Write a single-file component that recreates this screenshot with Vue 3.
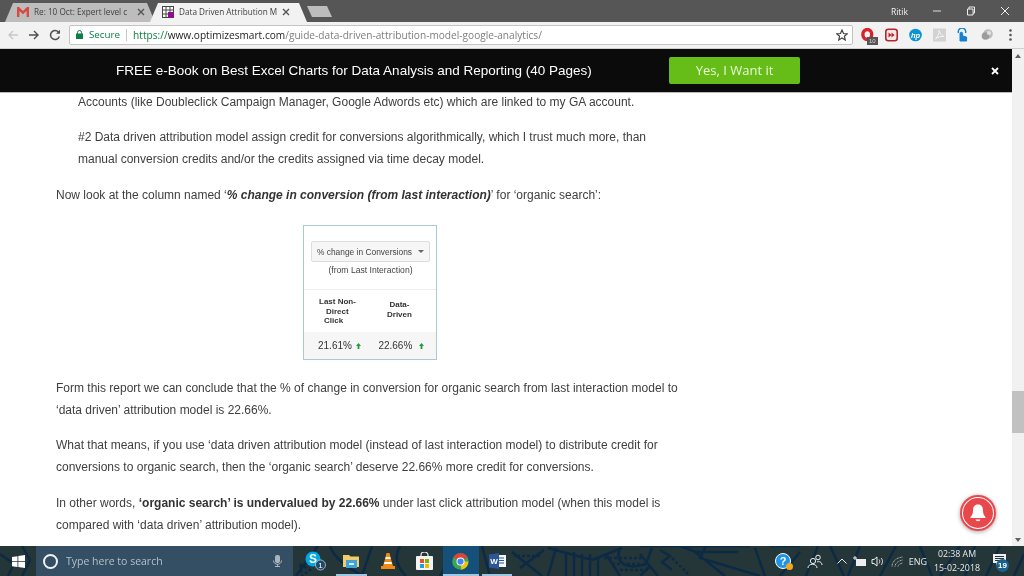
<script setup>
const paragraphs = [
  { cls: 'p-a indent', html: 'Accounts (like Doubleclick Campaign Manager, Google Adwords etc) which are linked to my GA account.' },
  { cls: 'p-b indent', html: '#2 Data driven attribution model assign credit for conversions algorithmically, which I trust much more, than<br>manual conversion credits and/or the credits assigned via time decay model.' },
  { cls: 'p-c', html: 'Now look at the column named ‘<b><i>% change in conversion (from last interaction)</i></b>’ for ‘organic search’:' }
]
const after = [
  { cls: 'p-d', html: 'Form this report we can conclude that the % of change in conversion for organic search from last interaction model to<br>‘data driven’ attribution model is 22.66%.' },
  { cls: 'p-e', html: 'What that means, if you use ‘data driven attribution model (instead of last interaction model) to distribute credit for<br>conversions to organic search, then the ‘organic search’ deserve 22.66% more credit for conversions.' },
  { cls: 'p-f', html: 'In other words, <b>‘organic search’ is undervalued by 22.66%</b> under last click attribution model (when this model is<br>compared with ‘data driven’ attribution model).' }
]
</script>

<template>
  <div class="screen">
    <div class="tabstrip">
      <div class="tab inactive">
        <svg class="fav" width="12" height="10" viewBox="0 0 12 10"><path d="M0 0h2l4 4 4-4h2v10h-2.400V4L6 7.200 2.400 4v6H0z" fill="#d64b3f"/></svg>
        <span class="tab-title">Re: 10 Oct: Expert level c</span>
        <svg class="tab-x" width="8" height="8" viewBox="0 0 8 8"><path d="M1 1l6 6M7 1L1 7" stroke="#555" stroke-width="1.400"/></svg>
      </div>
      <div class="tab active">
        <svg class="fav" width="12" height="12" viewBox="0 0 12 12"><rect width="12" height="12" fill="#fff"/><rect x="6" y="6" width="6" height="6" fill="#8e0f8e"/><path d="M.5 0v12M4 0v12M8 0v6M11.500 0v6M0 .5h12M0 4h12M0 8h6M0 11.500h6" stroke="#444" stroke-width="1"/></svg>
        <span class="tab-title">Data Driven Attribution M</span>
        <svg class="tab-x" width="8" height="8" viewBox="0 0 8 8"><path d="M1 1l6 6M7 1L1 7" stroke="#555" stroke-width="1.400"/></svg>
      </div>
      <div class="newtab"></div>
      <div class="spring"></div>
      <span class="user">Ritik</span>
      <svg class="win" width="10" height="10" viewBox="0 0 10 10"><path d="M1 5h8" stroke="#ddd"/></svg>
      <svg class="win" width="10" height="10" viewBox="0 0 10 10"><path d="M1.500 3h5.500v6h-5.500zM3 3V1h5.500v6H7" fill="none" stroke="#eee"/></svg>
      <svg class="win last" width="10" height="10" viewBox="0 0 10 10"><path d="M1 1l8 8M9 1l-8 8" stroke="#eee"/></svg>
    </div>

    <div class="toolbar">
      <svg class="nav" width="12" height="12" viewBox="0 0 12 12"><path d="M11 6H2M6 2L2 6l4 4" fill="none" stroke="#c8c8c8" stroke-width="1.400"/></svg>
      <svg class="nav" width="12" height="12" viewBox="0 0 12 12"><path d="M1 6h9M6 2l4 4-4 4" fill="none" stroke="#505050" stroke-width="1.400"/></svg>
      <svg class="nav reload" width="12" height="12" viewBox="0 0 12 12"><path d="M10.300 7.500A4.500 4.500 0 1 1 9.400 3" fill="none" stroke="#505050" stroke-width="1.500"/><path d="M11 .8v4H7z" fill="#505050"/></svg>
      <div class="omnibox">
        <svg width="7" height="9" viewBox="0 0 7 9"><path d="M1.500 4V2.500a2 2 0 0 1 4 0V4" fill="none" stroke="#0b8043"/><rect y="3.500" width="7" height="5.500" rx=".5" fill="#0b8043"/></svg>
        <span class="secure">Secure</span>
        <span class="sep"></span>
        <span class="url"><span class="https">https://</span><span class="host">www.optimizesmart.com</span>/guide-data-driven-attribution-model-google-analytics/</span>
        <span class="spring"></span>
        <svg width="12" height="12" viewBox="0 0 24 24"><path d="M12 2l3 7 7.500.6-5.700 5 1.700 7.400L12 18l-6.500 4 1.700-7.400-5.700-5L9 9z" fill="none" stroke="#444" stroke-width="2.400"/></svg>
      </div>
      <div class="ext">
        <span class="ext-item">
          <svg width="13" height="14" viewBox="0 0 13 14"><ellipse cx="6.300" cy="6.500" rx="4.400" ry="5" fill="none" stroke="#d8232a" stroke-width="3.400"/></svg>
          <span class="badge">10</span>
        </span>
        <svg class="ext-item" width="13" height="13" viewBox="0 0 13 13"><rect x=".8" y=".8" width="11.400" height="11.400" rx="2.500" fill="#f6e6e6" stroke="#b3262b" stroke-width="1.600"/><path d="M3.500 4l3 2.500-3 2.500zM6.500 4l3 2.500-3 2.500z" fill="#b3262b"/></svg>
        <svg class="ext-item" width="13" height="13" viewBox="0 0 13 13"><circle cx="6.500" cy="6.500" r="6.300" fill="#0a94d6"/><text x="6.500" y="9.200" text-anchor="middle" font-size="7.500" font-style="italic" font-weight="700" font-family="Liberation Sans, sans-serif" fill="#fff">hp</text></svg>
        <svg class="ext-item" width="13" height="13" viewBox="0 0 13 13"><rect width="13" height="13" fill="#d2d2d2"/><path d="M2.500 10.500C5 8 6.500 4 6 2c1 3 3 5.500 5 6-3-.5-6 .5-8.500 2.500z" fill="none" stroke="#f4f4f4"/></svg>
        <svg class="ext-item" width="13" height="14" viewBox="0 0 13 14"><path d="M3 13V5.500a1.300 1.300 0 0 1 2.600 0V8l4 1v4z" fill="#1680d0" stroke="#1680d0" stroke-width="1"/><path d="M1.500 5a3.700 3.700 0 1 1 7 0" fill="none" stroke="#1680d0" stroke-width="1.500"/></svg>
        <svg class="ext-item" width="13" height="13" viewBox="0 0 13 13"><circle cx="7" cy="5.500" r="4.800" fill="#bdbdbd"/><circle cx="4.500" cy="7.500" r="3.800" fill="#9c9c9c"/><circle cx="8" cy="4.500" r="2" fill="#e2e2e2"/></svg>
        <svg class="ext-item" width="3" height="12" viewBox="0 0 3 12"><circle cx="1.500" cy="1.500" r="1.300" fill="#555"/><circle cx="1.500" cy="6" r="1.300" fill="#555"/><circle cx="1.500" cy="10.500" r="1.300" fill="#555"/></svg>
      </div>
    </div>

    <div class="viewport">
      <div class="page">
        <div class="banner">
          <span class="banner-text">FREE e-Book on Best Excel Charts for Data Analysis and Reporting (40 Pages)</span>
          <span class="cta">Yes, I Want it</span>
          <svg class="close" width="8" height="8" viewBox="0 0 8 8"><path d="M1 1l6 6M7 1L1 7" stroke="#fff" stroke-width="1.800"/></svg>
        </div>
        <div class="article">
          <p v-for="p in paragraphs" :key="p.cls" :class="p.cls" v-html="p.html"></p>
          <div class="report">
            <div class="report-top">
              <div class="select"><span>% change in Conversions</span><i class="caret"></i></div>
              <div class="from">(from Last Interaction)</div>
            </div>
            <div class="heads">
              <div class="h1">Last Non-<br><span class="h1b">Direct</span><br><span class="h1c">Click</span></div>
              <div class="h2">Data-<br>Driven</div>
            </div>
            <div class="vals">
              <span class="val">21.61%<svg width="5" height="6" viewBox="0 0 5 6"><path d="M2.500 0L5 3H3.400v3H1.600V3H0z" fill="#1f9d38"/></svg></span>
              <span class="val">22.66%<svg class="far" width="5" height="6" viewBox="0 0 5 6"><path d="M2.500 0L5 3H3.400v3H1.600V3H0z" fill="#1f9d38"/></svg></span>
            </div>
          </div>
          <p v-for="p in after" :key="p.cls" :class="p.cls" v-html="p.html"></p>
        </div>
        <div class="bell">
          <svg width="20" height="20" viewBox="0 0 20 20"><path d="M10 1.500c-3.500 0-5 2.500-5 6 0 3.500-1 5-2.500 6.500v1h15v-1C16 12.500 15 11 15 7.500c0-3.500-1.500-6-5-6z" fill="#fff"/><path d="M7.500 16.500h5a2.500 1.800 0 0 1-5 0z" fill="#fff"/></svg>
        </div>
      </div>
      <div class="scrollbar">
        <i class="arrow up"></i>
        <div class="thumb"></div>
        <i class="arrow down"></i>
      </div>
    </div>

    <div class="taskbar">
      <svg class="wallpaper" width="1024" height="30" viewBox="0 0 1024 30"><path d="M0 8l14 10-6 12M22 0l8 14-8 16M296 30l22-30M330 0c4 12 20 24 34 30M372 0l-10 30M400 0c-6 10-4 20 6 30M440 30l16-30M482 0l8 30M512 6l30 24M520 22l24-18M556 2l-8 28M566 6v24M574 6v24M582 8v22M590 8v22M598 12v18M548 2l44 12 30-12M606 8l14 22M620 2c-6 16 8 22 26 16l6-16M640 30l10-10M660 4l10 6-8 6 10 8M680 0l16 6 42 0M640 0h110M640 8l18 22M695 6l30 24M706 0l-6 12 60 18M755 2l10 28M770 0h30M780 30l20-24M806 30l12-30M830 0l14 30M860 0l-12 30M880 30l16-30M920 0l12 30M940 30l20-30M975 0l-10 30M1000 0l-14 30M1014 30l10-22" fill="none" stroke="#0c2a44" stroke-width="2.500"/><path d="M300 18l10 6-8 6zM604 12h40M612 18h36M620 24h30M540 10h-26M672 12l16 16" fill="none" stroke="#0c2a44" stroke-width="2.500" stroke-dasharray="3 2"/></svg>
      <svg class="start" width="13" height="13" viewBox="0 0 13 13"><path d="M0 2l5.500-.8v5H0zM6.300 1.100L13 0v6.200H6.300zM0 7h5.500v5L0 11.200zM6.300 7H13v6l-6.700-1z" fill="#fff"/></svg>
      <div class="search">
        <span class="cortana"></span>
        <span class="search-text">Type here to search</span>
        <span class="spring"></span>
        <svg width="9" height="12" viewBox="0 0 9 12"><rect x="2" y="0" width="5" height="8" rx="2" fill="#a9b4bd"/><path d="M.5 5.500c0 5 8 5 8 0M4.500 9v2M2 11.500h5" fill="none" stroke="#a9b4bd"/></svg>
      </div>
      <div class="tb-icon">
        <svg width="24" height="24" viewBox="0 0 24 24"><circle cx="10" cy="10" r="7.500" fill="#00a9e6"/><text x="10" y="14" text-anchor="middle" font-size="12" font-weight="700" font-family="Liberation Sans, sans-serif" fill="#fff">S</text><circle cx="17.500" cy="16" r="5" fill="#1f4a66" stroke="#cde" stroke-width=".7"/><text x="17.500" y="19" text-anchor="middle" font-size="8" font-family="Liberation Sans, sans-serif" fill="#fff">1</text></svg>
      </div>
      <div class="tb-icon running">
        <svg width="17" height="14" viewBox="0 0 17 14"><path d="M0 1h6l1.500 1.500H16V13H0z" fill="#f2cd6c"/><rect x="3" y="6" width="11" height="8" fill="#3fa3dc"/><rect x="6" y="9" width="5" height="2" fill="#d8eef8"/></svg>
      </div>
      <div class="tb-icon">
        <svg width="14" height="16" viewBox="0 0 14 16"><path d="M5.500 0h3L10 6l2 7h2v3H0v-3h2l2-7z" fill="#f08a14"/><path d="M4.800 4h4.400l.5 2H4.300zM3.500 9h7l.5 2H3z" fill="#fff"/></svg>
      </div>
      <div class="tb-icon">
        <svg width="17" height="18" viewBox="0 0 17 18"><rect y="4" width="17" height="14" rx="1" fill="#f4f4f4"/><path d="M5 5V3a3.500 3 0 0 1 7 0v2" fill="none" stroke="#f4f4f4" stroke-width="1.200"/><rect x="4" y="7" width="4" height="4" fill="#e8522a"/><rect x="9" y="7" width="4" height="4" fill="#7ab800"/><rect x="4" y="12" width="4" height="4" fill="#1ca1e8"/><rect x="9" y="12" width="4" height="4" fill="#f9b800"/></svg>
      </div>
      <div class="tb-icon chrome running">
        <svg width="17" height="17" viewBox="0 0 17 17"><circle cx="8.500" cy="8.500" r="8.300" fill="#3aa757"/><path d="M8.500 8.500L1.300 4.300A8.300 8.300 0 0 1 15.700 4.300z" fill="#db4437"/><path d="M8.500 8.500h7.800a8.300 8.300 0 0 1-7 8.200z" fill="#f4c20d"/><circle cx="8.500" cy="8.500" r="4" fill="#fff"/><circle cx="8.500" cy="8.500" r="3.100" fill="#4285f4"/></svg>
      </div>
      <div class="tb-icon running">
        <svg width="17" height="16" viewBox="0 0 17 16"><rect x="7" y="2" width="10" height="12" fill="#f4f6fa"/><path d="M9 5h6M9 7.500h6M9 10h6" stroke="#2b579a"/><path d="M0 1.500L10 0v16L0 14.500z" fill="#2b579a"/><text x="5" y="11" text-anchor="middle" font-size="8" font-weight="700" font-family="Liberation Sans, sans-serif" fill="#fff">W</text></svg>
      </div>
      <div class="spring"></div>
      <div class="tray">
        <span class="slot"><span class="help">?<i></i></span></span>
        <span class="slot"><svg width="16" height="15" viewBox="0 0 16 15"><circle cx="6" cy="7" r="2.600" fill="none" stroke="#eee"/><path d="M1 14c0-5 9-5 9 0" fill="none" stroke="#eee"/><circle cx="11" cy="3.500" r="2.300" fill="none" stroke="#eee"/><path d="M10 8c2-1 5 0 5 3" fill="none" stroke="#eee"/></svg></span>
        <span class="slot"><svg width="10" height="6" viewBox="0 0 10 6"><path d="M.5 5.500L5 1l4.500 4.500" fill="none" stroke="#eee"/></svg></span>
        <span class="slot"><svg width="13" height="11" viewBox="0 0 13 11"><rect x="3" y="3" width="10" height="7" fill="#eee"/><path d="M0 2h4M2 0v4" stroke="#eee"/></svg></span>
        <span class="slot"><svg width="13" height="11" viewBox="0 0 13 11"><path d="M1 3.500h2L6 1v9L3 7.500H1z" fill="none" stroke="#eee"/><path d="M8 3.500c1 1 1 3 0 4M10 2c2 2 2 5 0 7" fill="none" stroke="#eee"/></svg></span>
        <span class="slot"><svg width="13" height="11" viewBox="0 0 13 11"><path d="M1 10.500C1 6 5 1.500 12 1M4 10.500C4 8 7 4.500 12 4M7 10.500C7 9 9 7.500 12 7" fill="none" stroke="#bbb" stroke-dasharray="1 .6"/></svg></span>
        <span class="slot">ENG</span>
        <div class="slot clock"><span>02:38 AM</span><span>15-02-2018</span></div>
        <span class="slot"><span class="note">
          <svg width="13" height="12" viewBox="0 0 13 12"><path d="M0 0h13v9H5l-2 3V9H0z" fill="#eee"/><path d="M2 2.500h9M2 4.500h9M2 6.500h6" stroke="#26343f"/></svg>
          <b>19</b>
        </span></span>
      </div>
    </div>
  </div>
</template>

<style>
html, body { margin: 0; padding: 0; overflow: hidden; background: #fff; }
</style>

<style scoped>
.screen { width: 1024px; height: 576px; display: flex; flex-direction: column; overflow: hidden; font-family: "Liberation Sans", Arial, sans-serif; background: #fff; filter: blur(0.35px); }
.spring { flex: 1; }

.tabstrip { height: 22px; flex: none; background: #565656; display: flex; align-items: flex-end; padding-left: 5px; position: relative; font-family: "Open Sans", sans-serif; }
.tab { height: 19px; width: 150px; display: flex; align-items: center; box-sizing: border-box; padding: 0 5px 2px 12px; font-size: 8.200px; clip-path: polygon(0 100%, 8px 0, calc(100% - 8px) 0, 100% 100%); white-space: nowrap; }
.tab.inactive { background: #bdbdbd; color: #3f3f3f; }
.tab.active { background: #f2f2f2; color: #404040; margin-left: -5px; width: 157px; }
.fav { flex: none; margin-right: 5px; }
.tab-title { flex: 1; min-width: 0; }
.tab-x { flex: none; margin: 0 5px 0 2px; }
.active .tab-x { margin-right: 12px; }
.newtab { width: 25px; height: 11px; margin: 0 0 5px 0; background: #bdbdbd; clip-path: polygon(0 0, 80% 0, 100% 100%, 20% 100%); align-self: flex-end; }
.user { font-size: 8.500px; color: #f0f0f0; align-self: center; margin-right: 24px; }
.win { align-self: center; margin-right: 24px; }
.win.last { margin-right: 14px; margin-left: 0; }

.toolbar { height: 27px; flex: none; box-sizing: border-box; background: #f2f2f2; display: flex; align-items: center; padding: 0 0 1px 7px; border-bottom: 1px solid #cfcfcf; }
.nav { margin-right: 9px; flex: none; }
.nav.reload { margin-right: 8px; }
.omnibox { width: 784px; height: 20px; box-sizing: border-box; background: #fff; border: 1px solid #c4c4c4; border-radius: 2px; display: flex; align-items: center; padding: 0 4px 0 6px; font-size: 10.150px; font-family: "Open Sans", sans-serif; white-space: nowrap; color: #7d7d7d; }
.secure { color: #0b8043; margin: 0 6px 0 6px; font-size: 9.800px; }
.sep { width: 1px; height: 12px; background: #c8c8c8; margin-right: 6px; }
.https { color: #0b8043; }
.host { color: #222; }
.ext { display: flex; align-items: center; flex: 1; padding-left: 8px; }
.ext-item { position: relative; margin-right: 11px; flex: none; display: block; height: 14px; width: 13px; }
.ext-item:last-child { margin-right: 0; margin-left: 4px; width: 3px; }
.badge { position: absolute; left: 6px; top: 9px; background: #555; color: #ddd; font-size: 6px; line-height: 8px; padding: 0 2px; }

.viewport { flex: 1; min-height: 0; display: flex; }
.page { flex: 1; min-width: 0; position: relative; display: flex; flex-direction: column; overflow: hidden; }
.banner { height: 43px; flex: none; background: #0b0b0b; display: flex; align-items: center; color: #fff; border-bottom: 1px solid #bbb; }
.banner-text { font-size: 13.500px; margin-left: 116px; width: 553px; white-space: nowrap; }
.cta { width: 131px; height: 27px; background: #66bd18; border-radius: 2px; font-family: "Open Sans", sans-serif; font-size: 13px; text-align: center; line-height: 27px; color: #e9f7d8; }
.close { margin-left: 191px; }

.article { flex: 1; min-height: 0; padding-left: 56px; font-size: 12px; line-height: 22px; color: #404040; white-space: nowrap; }
.article :deep(b) { color: #333; }
p { margin: 0; }
.indent { padding-left: 22px; }
.p-a { margin-top: -2px; }
.p-b { margin-top: 13px; }
.p-c { margin-top: 14px; }
.p-d { margin-top: 17px; }
.p-e { margin-top: 13px; }
.p-f { margin-top: 14px; }

.report { width: 132px; height: 133px; margin: 19px 0 0 247px; border: 1px solid #a9c8da; background: #fff; display: flex; flex-direction: column; font-size: 8.400px; line-height: 10px; color: #444; }
.report-top { height: 64px; box-sizing: border-box; padding: 15px 6px 0 7px; border-bottom: 1px solid #eee; }
.select { height: 21px; box-sizing: border-box; border: 1px solid #ddd; border-radius: 2px; background: #f6f6f6; display: flex; align-items: center; justify-content: space-between; padding: 0 5px; }
.caret { border: 3px solid transparent; border-top: 3px solid #666; border-bottom: 0; }
.from { text-align: center; margin-top: 3px; font-size: 8.600px; }
.heads { height: 42px; display: flex; font-weight: 700; line-height: 9.500px; color: #333; font-size: 8px; }
.h1 { width: 68px; padding-top: 7px; text-align: left; padding-left: 15px; box-sizing: border-box; }
.h1b { padding-left: 7px; }
.h1c { padding-left: 5px; }
.h2 { padding-top: 10px; padding-left: 15px; text-align: center; }
.vals { flex: 1; background: #f5f6f5; display: flex; align-items: center; padding-left: 14px; font-size: 10px; color: #333; white-space: nowrap; }
.val { display: flex; align-items: center; width: 63px; }
.val:first-child { width: 66px; }
.val svg { margin-left: 4px; }
.val svg.far { margin-left: 7px; }

.bell { position: absolute; right: 16px; top: 446px; width: 36px; height: 36px; box-sizing: border-box; border-radius: 50%; background: #e8474c; display: flex; align-items: center; justify-content: center; box-shadow: 0 1px 4px rgba(0,0,0,.35), inset 0 0 0 2px #e8474c, inset 0 0 0 3px #fff; }

.scrollbar { width: 12px; flex: none; background: #f1f1f1; display: flex; flex-direction: column; align-items: stretch; }
.arrow { display: block; width: 0; margin: 5px auto 0; border: 3.500px solid transparent; border-top: 0; border-bottom: 4px solid #606060; }
.arrow.down { margin: auto auto 4px; border-bottom: 0; border-top: 4px solid #606060; }
.thumb { height: 42px; margin-top: 333px; background: #c1c1c1; }

.taskbar { height: 30px; flex: none; display: flex; align-items: center; background: #253639; position: relative; }
.wallpaper { position: absolute; left: 0; top: 0; }
.start { margin: 0 11px 0 12px; position: relative; }
.search { width: 257px; height: 30px; box-sizing: border-box; background: #344e63; display: flex; align-items: center; padding: 0 11px 0 7px; color: #b3c0ca; font-family: "Open Sans", sans-serif; font-size: 10.500px; position: relative; margin-right: 4px; }
.cortana { width: 11px; height: 11px; border: 2px solid #eef2f4; border-radius: 50%; margin-right: 8px; }
.tb-icon { width: 36.400px; height: 30px; flex: none; display: flex; align-items: center; justify-content: center; box-sizing: border-box; position: relative; }
.tb-icon.running::after { content: ""; position: absolute; left: 3px; right: 3px; bottom: 0; height: 2px; background: #9fc7e2; }
.tb-icon.chrome { background: #14507a; }
.tb-icon.chrome::after { left: 0; right: 0; }
.tray { display: flex; align-items: center; height: 30px; color: #e8e8e8; font-family: "Open Sans", sans-serif; font-size: 9px; padding-right: 8px; position: relative; }
.slot { display: flex; align-items: center; justify-content: center; width: 30px; white-space: nowrap; }
.slot:nth-child(2) { width: 34px; }
.slot:nth-child(3) { width: 20px; }
.slot:nth-child(4) { width: 14px; }
.slot:nth-child(5) { width: 22px; }
.slot:nth-child(6) { width: 18px; }
.slot:nth-child(7) { width: 24px; }
.slot:nth-child(8) { width: 54px; }
.slot:nth-child(9) { width: 32px; }
.clock { flex-direction: column; line-height: 14px; font-size: 8.800px; }
.help { width: 14px; height: 14px; border-radius: 50%; background: #1f93e6; border: 1px solid #fff; color: #fff; font-size: 11px; font-weight: 700; text-align: center; line-height: 14px; position: relative; font-family: "Liberation Sans", sans-serif; }
.help i { position: absolute; right: -3px; bottom: -2px; width: 7px; height: 7px; border-radius: 50%; background: #f2a71b; }
.note { position: relative; width: 14px; height: 20px; padding-top: 3px; box-sizing: border-box; }
.note b { position: absolute; left: 3px; top: 8px; width: 13px; height: 13px; line-height: 13px; border-radius: 50%; background: #19628f; color: #fff; text-align: center; font-size: 8px; font-weight: 700; font-family: "Liberation Sans", sans-serif; }
</style>
